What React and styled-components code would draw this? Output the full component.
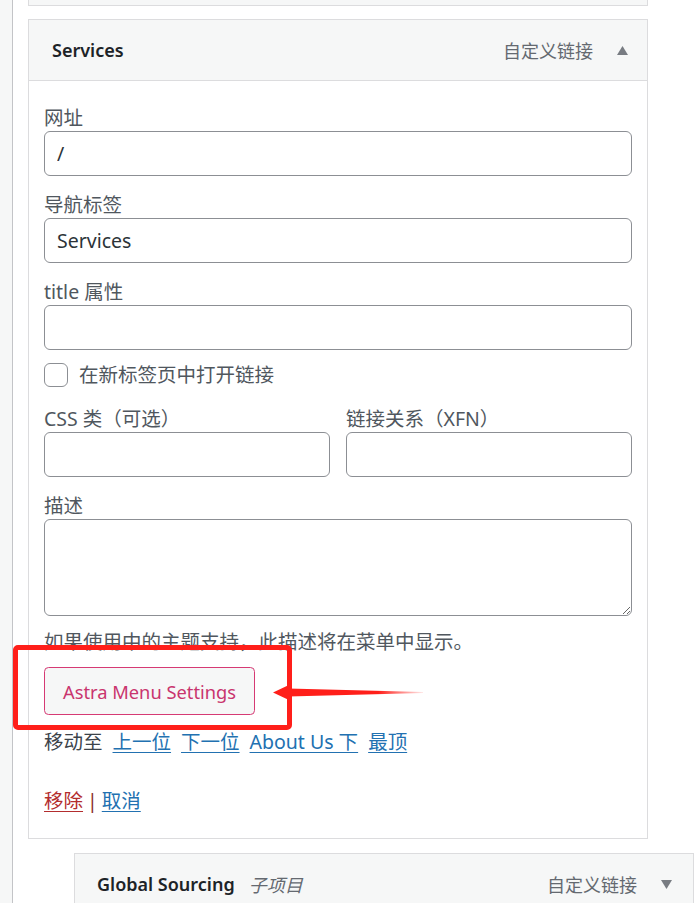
import React from "react";
import styled, { createGlobalStyle } from "styled-components";

const GlobalStyle = createGlobalStyle`
  html, body { margin: 0; padding: 0; background: #fff; }
  body {
    font-family: "Noto Sans", "Noto Sans CJK SC", sans-serif;
    overflow: hidden;
  }
  *, *::before, *::after { box-sizing: border-box; }
`;

const FONT = `"Noto Sans", "Noto Sans CJK SC", sans-serif`;

const Page = styled.div`
  display: flex;
  height: 903px;
  overflow: hidden;
  background: #fff;
`;

const SideStrip = styled.div`
  flex: 0 0 13px;
  background: #f6f7f7;
  border-right: 1px solid #c3c4c7;
`;

const Main = styled.div`
  flex: 1;
  display: flex;
  flex-direction: column;
  padding-left: 15px;
`;

const StubPanel = styled.div`
  width: 620px;
  height: 6px;
  flex: 0 0 6px;
  background: #f6f7f7;
  border: 1px solid #dcdcde;
  border-top: none;
  margin-bottom: 13px;
`;

const Panel = styled.div`
  width: 620px;
  flex: 0 0 auto;
  margin-left: ${(p) => (p.$depth || 0) * 46}px;
  margin-top: ${(p) => p.$mt || 0}px;
  border: 1px solid #dcdcde;
  background: #fff;
`;

const Header = styled.div`
  height: ${(p) => (p.$open ? 61 : 60)}px;
  display: flex;
  align-items: center;
  padding: 0 ${(p) => (p.$open ? 19 : 21)}px 0 ${(p) => (p.$open ? 23 : 22)}px;
  background: #f6f7f7;
  border-bottom: ${(p) => (p.$open ? "1px solid #dcdcde" : "none")};
`;

const Title = styled.span`
  font-family: ${FONT};
  font-size: 18px;
  font-weight: 600;
  color: #1d2327;
`;

const SubTag = styled.span`
  font-family: ${FONT};
  font-size: 18px;
  font-style: italic;
  color: #646970;
  margin-left: 14px;
`;

const TypeLabel = styled.span`
  margin-left: auto;
  font-family: ${FONT};
  font-size: 18px;
  color: #646970;
`;

const ToggleIcon = styled.svg`
  width: 11px;
  height: 9px;
  margin-left: 24px;
  fill: #787c82;
`;

const Body = styled.div`
  display: flex;
  flex-direction: column;
  padding: 23px 15px 24px;
`;

const Field = styled.div`
  display: flex;
  flex-direction: column;
  margin-top: ${(p) => p.$mt || 0}px;
`;

const Label = styled.label`
  font-family: ${FONT};
  font-size: 19.5px;
  line-height: 27px;
  height: 27px;
  color: #50575e;
  white-space: nowrap;
`;

const TextInput = styled.input`
  display: block;
  width: 100%;
  height: 45px;
  margin: 0;
  padding: 0 12px;
  border: 1px solid #8c8f94;
  border-radius: 6px;
  background: #fff;
  font-family: ${FONT};
  font-size: 19.5px;
  color: #2c3338;
  outline: none;
`;

const TextArea = styled.textarea`
  display: block;
  width: 100%;
  height: 97px;
  margin: 0;
  padding: 6px 12px;
  border: 1px solid #8c8f94;
  border-radius: 6px;
  background: #fff;
  font-family: ${FONT};
  font-size: 19.5px;
  color: #2c3338;
  resize: vertical;
  outline: none;
`;

const CheckRow = styled.label`
  display: flex;
  align-items: center;
  gap: 11px;
  height: 24px;
  margin-top: 13px;
  font-family: ${FONT};
  font-size: 19.5px;
  line-height: 24px;
  color: #50575e;
`;

const CheckBox = styled.input`
  appearance: none;
  -webkit-appearance: none;
  width: 24px;
  height: 24px;
  margin: 0;
  border: 1px solid #8c8f94;
  border-radius: 6px;
  background: #fff;
`;

const TwoCol = styled.div`
  display: grid;
  grid-template-columns: 1fr 1fr;
  column-gap: 16px;
  margin-top: 18px;
`;

const Text = styled.p`
  margin: ${(p) => p.$mt || 0}px 0 0;
  font-family: ${FONT};
  font-size: 19.5px;
  line-height: 27px;
  height: 27px;
  color: ${(p) => p.$color || "#50575e"};
  white-space: nowrap;
  display: flex;
  gap: ${(p) => p.$gap || 0}px;
`;

const ButtonRow = styled.div`
  position: relative;
  margin-top: 12px;
  display: flex;
`;

const AstraButton = styled.button`
  height: 48px;
  padding: 0 18px;
  border: 1px solid #d63a74;
  border-radius: 4.5px;
  background: #f6f7f7;
  color: #c9356e;
  font-family: ${FONT};
  font-size: 18.3px;
  cursor: pointer;
`;

const HighlightBox = styled.div`
  position: absolute;
  left: -31px;
  top: -22px;
  width: 279px;
  height: 85px;
  border: 5px solid #ff1f1a;
  border-radius: 5px;
  pointer-events: none;
`;

const ArrowMark = styled.svg`
  position: absolute;
  left: 229px;
  top: 16px;
  width: 152px;
  height: 19px;
  pointer-events: none;
  overflow: visible;
`;

const Link = styled.a`
  color: ${(p) => p.$color || "#2271b1"};
  text-decoration: underline;
  text-underline-offset: 3px;
  cursor: pointer;
`;

const Sep = styled.span`
  color: #8a2c2c;
  margin: 0 4px;
`;

function Triangle({ up }) {
  return (
    <ToggleIcon viewBox="0 0 11 9" aria-hidden="true">
      {up ? <polygon points="5.5,0 11,9 0,9" /> : <polygon points="0,0 11,0 5.5,9" />}
    </ToggleIcon>
  );
}

export default function App() {
  return (
    <>
      <GlobalStyle />
      <Page>
        <SideStrip />
        <Main>
          <StubPanel />
          <Panel>
            <Header $open>
              <Title>Services</Title>
              <TypeLabel>自定义链接</TypeLabel>
              <Triangle up />
            </Header>
            <Body>
              <Field>
                <Label>网址</Label>
                <TextInput defaultValue="/" />
              </Field>
              <Field $mt={15}>
                <Label>导航标签</Label>
                <TextInput defaultValue="Services" />
              </Field>
              <Field $mt={15}>
                <Label>title 属性</Label>
                <TextInput defaultValue="" />
              </Field>
              <CheckRow>
                <CheckBox type="checkbox" />
                在新标签页中打开链接
              </CheckRow>
              <TwoCol>
                <Field>
                  <Label>CSS 类（可选）</Label>
                  <TextInput defaultValue="" />
                </Field>
                <Field>
                  <Label>链接关系（XFN）</Label>
                  <TextInput defaultValue="" />
                </Field>
              </TwoCol>
              <Field $mt={15}>
                <Label>描述</Label>
                <TextArea defaultValue="" />
              </Field>
              <Text $mt={12}>如果使用中的主题支持，此描述将在菜单中显示。</Text>
              <ButtonRow>
                <AstraButton type="button">Astra Menu Settings</AstraButton>
                <HighlightBox />
                <ArrowMark viewBox="0 0 152 19" aria-hidden="true">
                  <defs>
                    <linearGradient id="arrowFade" x1="0" y1="0" x2="1" y2="0">
                      <stop offset="0" stopColor="#ff1f1a" />
                      <stop offset="0.7" stopColor="#ff1f1a" />
                      <stop offset="1" stopColor="#ff1f1a" stopOpacity="0.1" />
                    </linearGradient>
                  </defs>
                  <polygon
                    points="0,9.5 18,1 15,5.5 150,9 150,10 15,13.5 18,18"
                    fill="url(#arrowFade)"
                  />
                </ArrowMark>
              </ButtonRow>
              <Text $mt={13} $color="#3c434a" $gap={10}>
                <span>移动至</span>
                <Link>上一位</Link>
                <Link>下一位</Link>
                <Link>About Us 下</Link>
                <Link>最顶</Link>
              </Text>
              <Text $mt={32}>
                <Link $color="#b32d2e">移除</Link>
                <Sep>|</Sep>
                <Link>取消</Link>
              </Text>
            </Body>
          </Panel>
          <Panel $depth={1} $mt={14}>
            <Header>
              <Title>Global Sourcing</Title>
              <SubTag>子项目</SubTag>
              <TypeLabel>自定义链接</TypeLabel>
              <Triangle />
            </Header>
          </Panel>
        </Main>
      </Page>
    </>
  );
}
